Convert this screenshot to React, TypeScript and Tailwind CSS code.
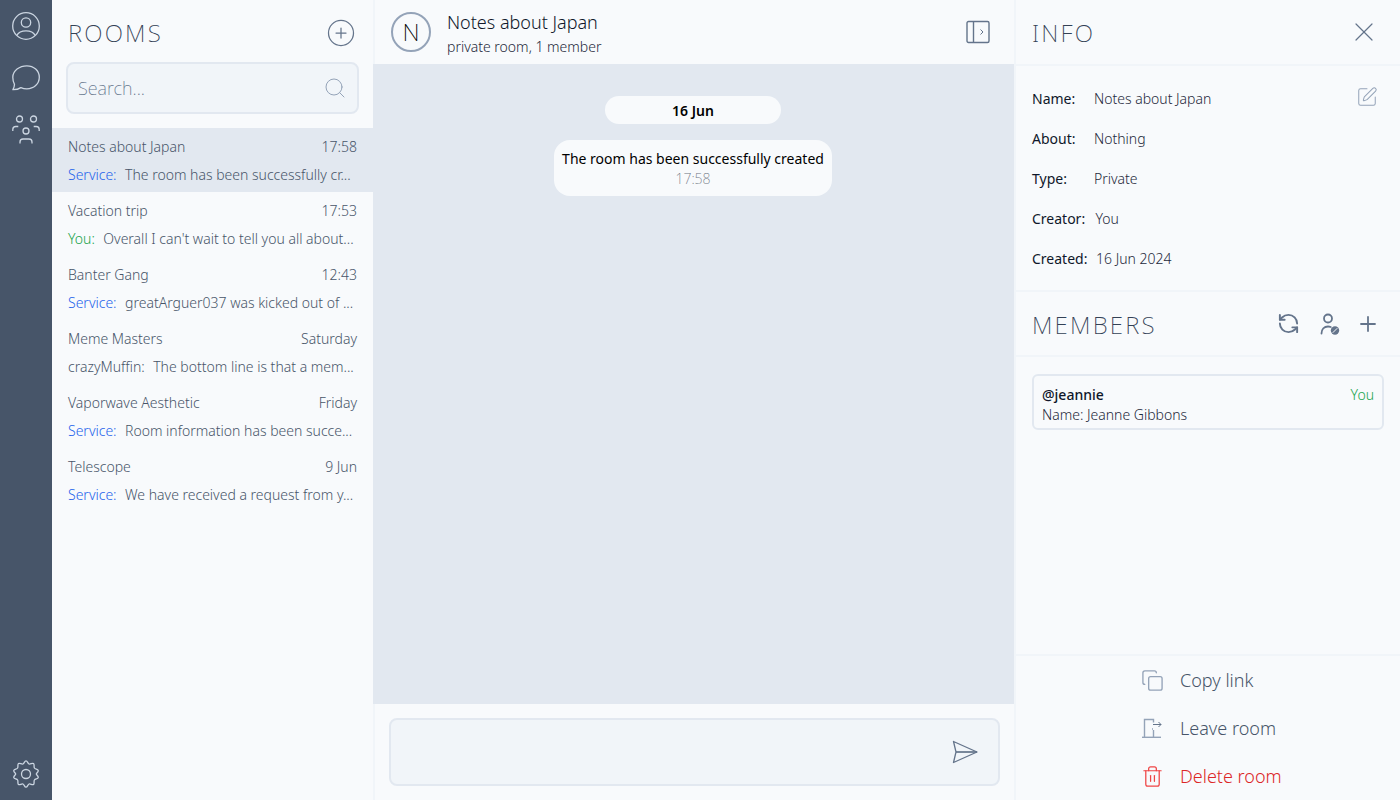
import { Copy, Plus, RefreshCcw, Search, SquarePen, Trash2, X, CirclePlus } from "lucide-react";

const rooms = [
  { name: "Notes about Japan", time: "17:58", who: "Service:", kind: "service", text: "The room has been successfully cr...", active: true },
  { name: "Vacation trip", time: "17:53", who: "You:", kind: "you", text: "Overall I can't wait to tell you all about..." },
  { name: "Banter Gang", time: "12:43", who: "Service:", kind: "service", text: "greatArguer037 was kicked out of ..." },
  { name: "Meme Masters", time: "Saturday", who: "crazyMuffin:", kind: "user", text: "The bottom line is that a mem..." },
  { name: "Vaporwave Aesthetic", time: "Friday", who: "Service:", kind: "service", text: "Room information has been succe..." },
  { name: "Telescope", time: "9 Jun", who: "Service:", kind: "service", text: "We have received a request from y..." },
];

const info = [
  { label: "Name:", value: "Notes about Japan", gap: "w-[62px]" },
  { label: "About:", value: "Nothing", gap: "w-[62px]" },
  { label: "Type:", value: "Private", gap: "w-[62px]" },
  { label: "Creator:", value: "You", gap: "w-[63.5px]" },
  { label: "Created:", value: "16 Jun 2024", gap: "w-[64px]" },
];

function ProfileIcon() {
  return (
    <svg width="28" height="28" viewBox="0 0 28 28" fill="none" stroke="#cbd5e1" strokeWidth="1.3">
      <circle cx="14" cy="14" r="13.300" />
      <circle cx="14" cy="10.500" r="4.700" />
      <path d="M4.800 23.500c1.500-3 4.800-4.600 9.200-4.600s7.700 1.600 9.200 4.600" />
    </svg>
  );
}

function ChatIcon() {
  return (
    <svg width="28" height="26" viewBox="0 0 28 26" fill="none" stroke="#cbd5e1" strokeWidth="1.3" strokeLinejoin="round">
      <path d="M14.800.8c7 0 12.500 4.900 12.500 11.500s-5.500 11.600-12.500 11.600c-2.100 0-4.100-.5-5.900-1.300-2 1.400-5 2.100-8 2.100 1-1.500 1.500-3.400 1.600-5.400C1.400 17.500.8 15 .8 12.300.8 5.700 7.500.8 14.800.8z" />
    </svg>
  );
}

function GroupIcon() {
  return (
    <svg width="28" height="29" viewBox="0 0 28 29" fill="none" stroke="#cbd5e1" strokeWidth="1.300">
      <circle cx="7.500" cy="4" r="3" />
      <circle cx="21.500" cy="4" r="3" />
      <circle cx="14" cy="16" r="3" />
      <path d="M.8 16v-1.500c0-2 1.200-3 3-3h2.500M27.200 16v-1.500c0-2-1.200-3-3-3h-2.500M8 28.500V27c0-2 1.200-3 3-3h6c1.800 0 3 1 3 3v1.500" />
    </svg>
  );
}

function GearIcon() {
  return (
    <svg width="28" height="28" viewBox="0 0 28 28" fill="none" stroke="#cbd5e1" strokeWidth="1.300" strokeLinejoin="round">
      <path d="M14 .8c1.500 0 1.700 2.700 3 3.200 1.400.5 3.300-1.300 4.500-.5 1.200.9.100 3.300.9 4.500.8 1.200 3.400 1 3.800 2.400.4 1.400-1.900 2.700-1.900 3.600s2.300 2.200 1.900 3.600c-.4 1.400-3 1.200-3.800 2.400-.8 1.200.3 3.600-.9 4.500-1.200.8-3.100-1-4.500-.5-1.300.5-1.500 3.200-3 3.200s-1.700-2.700-3-3.200c-1.400-.5-3.300 1.300-4.500.5-1.200-.9-.1-3.300-.9-4.500-.8-1.200-3.400-1-3.800-2.400-.4-1.400 1.900-2.700 1.900-3.600S1.400 11.800 1.800 10.400c.4-1.400 3-1.200 3.800-2.400.8-1.200-.3-3.600.9-4.500 1.200-.8 3.100 1 4.500.5C12.300 3.500 12.500.8 14 .8z" />
      <circle cx="14" cy="14" r="4.500" />
    </svg>
  );
}

function PanelIcon() {
  return (
    <svg width="24" height="24" viewBox="0 0 24 24" fill="none" stroke="#64748b" strokeWidth="1.400">
      <rect x="1" y="1.500" width="22" height="21" rx="1.500" />
      <path d="M7.500 1.500v21" />
      <path d="M14.500 9.500l2.500 2.500-2.500 2.500" strokeWidth="1" />
    </svg>
  );
}

function UserBlockedIcon() {
  return (
    <svg width="20" height="22" viewBox="0 0 20 22" fill="none" stroke="#64748b" strokeWidth="1.800" strokeLinecap="round">
      <circle cx="8" cy="5.500" r="4" />
      <path d="M1.500 20.500c0-4.500 2.800-7 6.500-7 1 0 2 .2 2.800.5" />
      <circle cx="15" cy="17.500" r="4.200" fill="#64748b" stroke="none" />
      <path d="M13 19.500l4-4" stroke="#f8fafc" strokeWidth="1" />
    </svg>
  );
}

function DoorIcon() {
  return (
    <svg width="20" height="20" viewBox="0 0 20 20" fill="none" stroke="#94a3b8" strokeWidth="1.400">
      <path d="M0 19.300h19" />
      <path d="M2.500 19.300V1.500h9v3M11.500 12v7.300" />
      <path d="M11 6.500h8M16.500 4l2.500 2.500L16.500 9" stroke="#64748b" strokeWidth="1" />
      <path d="M10 11h1" strokeWidth="1.500" />
    </svg>
  );
}

function SendIcon() {
  return (
    <svg width="26" height="24" viewBox="0 0 26 24" fill="none" stroke="#64748b" strokeWidth="1.300" strokeLinejoin="round">
      <path d="M1.500 1.500L25 12 1.500 22.500 4 12z" />
      <path d="M4 12h21" strokeWidth="1.700" />
    </svg>
  );
}

function RoomRow({ room }: { room: (typeof rooms)[number] }) {
  return (
    <div className={`h-16 pl-4 pr-4 pt-[7px] ${room.active ? "bg-slate-200" : ""}`}>
      <div className="flex h-6 items-center justify-between text-sm font-light text-[#475569]">
        <span>{room.name}</span>
        <span>{room.time}</span>
      </div>
      <div className="mt-1 flex h-6 items-center gap-[8.5px] text-sm font-light text-[#475569] whitespace-nowrap">
        <span className={room.kind === "service" ? "text-[#2563eb]" : room.kind === "you" ? "text-[#16a34a]" : ""}>{room.who}</span>
        <span>{room.text}</span>
      </div>
    </div>
  );
}

function App() {
  return (
    <div className="flex h-[800px] w-[1400px] overflow-hidden bg-slate-50 text-[#0f172a] font-['Noto_Sans',sans-serif]">
      {/* icon rail */}
      <nav className="flex w-[52px] shrink-0 flex-col items-center justify-between bg-[#475569] py-3">
        <div className="flex flex-col items-center gap-[25px]">
          <ProfileIcon />
          <ChatIcon />
          <div className="-mt-px">
            <GroupIcon />
          </div>
        </div>
        <GearIcon />
      </nav>

      {/* rooms list */}
      <aside className="w-[321px] shrink-0">
        <div className="flex h-[62px] items-center justify-between pl-4 pr-[17px] pt-1">
          <h2 className="text-2xl font-extralight tracking-[2.2px] text-[#334155]">ROOMS</h2>
          <CirclePlus size={30} strokeWidth={1} className="text-[#64748b]" />
        </div>
        <div className="pl-[14px] pr-[14px]">
          <div className="flex h-[52px] items-center justify-between rounded-lg border-2 border-slate-200 bg-slate-100 pl-[10px] pr-[10px]">
            <span className="text-lg font-extralight text-[#64748b]">Search...</span>
            <Search size={24} strokeWidth={1} className="text-[#94a3b8]" />
          </div>
        </div>
        <div className="mt-[14px]">
          {rooms.map((room) => (
            <RoomRow key={room.name} room={room} />
          ))}
        </div>
      </aside>

      {/* chat */}
      <main className="flex w-[643px] shrink-0 flex-col border-r-2 border-slate-100">
        <header className="flex h-[64px] shrink-0 items-center justify-between border-l-2 border-slate-100 pl-4 pr-6">
          <div className="flex items-center gap-4">
            <div className="flex h-10 w-10 items-center justify-center rounded-full border-2 border-[#94a3b8] text-2xl font-extralight text-black">N</div>
            <div className="pt-[2px]">
              <div className="text-lg leading-[26px] font-light text-[#0f172a]">Notes about Japan</div>
              <div className="mt-[2px] text-sm leading-5 font-light text-[#1e293b]">private room, 1 member</div>
            </div>
          </div>
          <PanelIcon />
        </header>
        <div className="flex flex-1 flex-col items-center bg-slate-200 pt-8 pr-px">
          <div className="flex h-7 w-44 items-center justify-center rounded-2xl bg-slate-50 pt-[2px] text-sm font-semibold text-black">16 Jun</div>
          <div className="mt-4 flex h-14 flex-col items-center rounded-2xl bg-slate-50 px-2 pt-[9px]">
            <div className="text-sm leading-5 text-black">The room has been successfully created</div>
            <div className="text-sm leading-5 font-extralight text-[#6b7280]">17:58</div>
          </div>
        </div>
        <div className="flex h-[96px] shrink-0 items-start border-l-2 border-slate-100 pl-[14px] pr-[14px] pt-[14px]">
          <div className="flex h-[68px] w-full items-center justify-end rounded-lg border-2 border-slate-200 bg-slate-100 pr-5">
            <SendIcon />
          </div>
        </div>
      </main>

      {/* info */}
      <aside className="flex min-w-0 flex-1 flex-col">
        <div className="flex h-[66px] shrink-0 items-center justify-between border-b-2 border-slate-100 pl-4 pr-5">
          <h2 className="mt-[2px] text-2xl font-extralight tracking-[2.2px] text-[#334155]">INFO</h2>
          <X size={32} strokeWidth={0.9} className="text-[#64748b]" />
        </div>
        <div className="relative h-[226px] shrink-0 border-b-2 border-slate-100 pl-4 pt-[13px]">
          {info.map((row) => (
            <div key={row.label} className="flex h-10 items-center text-sm">
              <span className={`${row.gap} font-normal text-[#0f172a]`}>{row.label}</span>
              <span className="font-light text-[#1e293b]">{row.value}</span>
            </div>
          ))}
          <SquarePen size={22} strokeWidth={1.1} className="absolute top-5 right-[22px] text-[#94a3b8]" />
        </div>
        <div className="flex h-[65px] shrink-0 items-center justify-between border-b-2 border-slate-100 pl-4 pr-5">
          <h2 className="mt-[2px] text-2xl font-extralight tracking-[2.2px] text-[#334155]">MEMBERS</h2>
          <div className="flex items-center">
            <RefreshCcw size={23} strokeWidth={2} className="text-[#64748b]" />
            <div className="mr-4 ml-5">
              <UserBlockedIcon />
            </div>
            <Plus size={24} strokeWidth={1.8} className="text-[#64748b]" />
          </div>
        </div>
        <div className="flex-1 px-4 pt-[17px]">
          <div className="h-[56px] rounded-md border-2 border-slate-200 px-2 pt-[9px]">
            <div className="flex justify-between text-sm leading-5">
              <span className="font-medium text-[#0f172a]">@jeannie</span>
              <span className="font-light text-[#16a34a]">You</span>
            </div>
            <div className="text-sm leading-5 font-light text-[#1e293b]">Name: Jeanne Gibbons</div>
          </div>
        </div>
        <div className="flex h-[146px] shrink-0 flex-col border-t-2 border-slate-100 pl-[124px]">
          <div className="flex h-12 items-center gap-4 text-lg font-light text-[#475569]">
            <div className="flex w-6 justify-center">
              <Copy size={23} strokeWidth={1.4} className="text-[#94a3b8]" />
            </div>
            <span>Copy link</span>
          </div>
          <div className="flex h-12 items-center gap-4 text-lg font-light text-[#475569]">
            <div className="flex w-6 justify-center">
              <DoorIcon />
            </div>
            <span>Leave room</span>
          </div>
          <div className="flex h-12 items-center gap-4 text-lg font-light text-[#dc2626]">
            <div className="flex w-6 justify-center">
              <Trash2 size={23} strokeWidth={1.3} className="text-[#ef4444]" />
            </div>
            <span>Delete room</span>
          </div>
        </div>
      </aside>
    </div>
  );
}

export default App;
